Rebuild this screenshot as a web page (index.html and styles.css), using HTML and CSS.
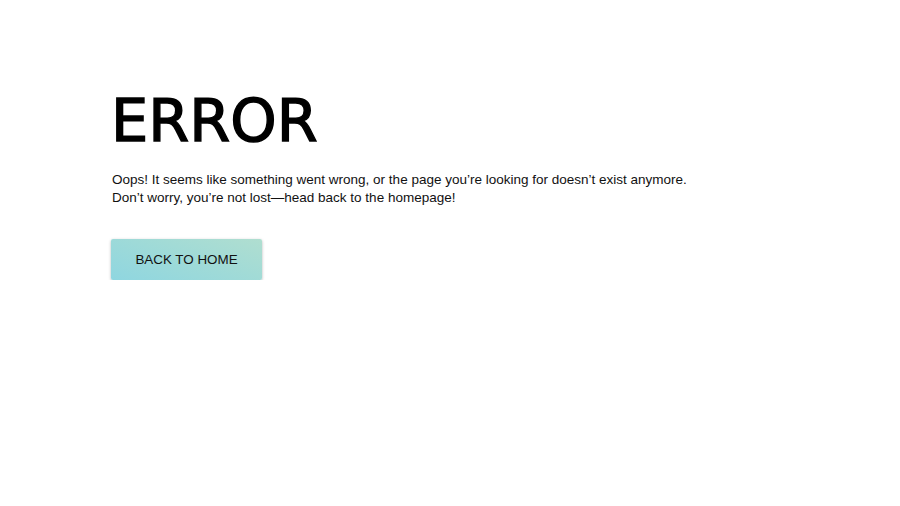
FILE: index.html
```html
<!DOCTYPE html>
<html>
<head>
<meta charset="utf-8">
<link rel="stylesheet" href="styles.css">
</head>
<body>
<main class="error-page">
  <h1 class="title">ERROR</h1>
  <p class="message">Oops! It seems like something went wrong, or the page you’re looking for doesn’t exist anymore.<br>Don’t worry, you’re not lost—head back to the homepage!</p>
  <a class="home-btn" href="#">BACK TO HOME</a>
</main>
</body>
</html>
```
FILE: styles.css
```css
html, body {
  margin: 0;
  padding: 0;
  background: #ffffff;
}
.error-page {
  padding: 86px 0 0 111px;
  display: flex;
  flex-direction: column;
  align-items: flex-start;
}
.title {
  margin: 0;
  font-family: "DejaVu Sans", sans-serif;
  font-weight: 400;
  font-size: 59px;
  line-height: 70px;
  color: #000;
  -webkit-text-stroke: 1.4px #000;
}
.message {
  margin: 15px 0 0 1px;
  font-family: "Liberation Sans", Arial, sans-serif;
  font-size: 13.5px;
  line-height: 18px;
  color: #111;
}
.home-btn {
  margin-top: 32px;
  width: 151px;
  height: 41px;
  display: flex;
  align-items: center;
  justify-content: center;
  font-family: "Liberation Sans", Arial, sans-serif;
  font-size: 13.4px;
  color: #111;
  text-decoration: none;
  background: linear-gradient(20deg, #8fd6e0 0%, #a2dbd6 60%, #b0ded0 100%);
  border-radius: 2px;
  box-shadow: 0 1px 3px rgba(0,0,0,0.3);
}
```
